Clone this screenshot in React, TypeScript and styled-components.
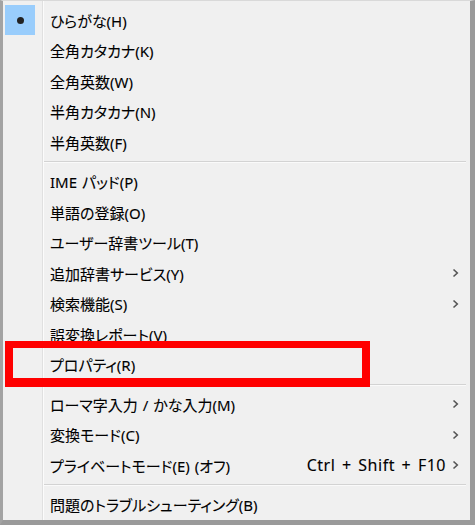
import styled, { createGlobalStyle } from 'styled-components';

const GlobalStyle = createGlobalStyle`
  html, body {
    margin: 0;
    padding: 0;
    background: #f0f0f0;
  }
  body {
    font-family: 'Noto Sans', 'Noto Sans CJK JP', sans-serif;
  }
`;

const Menu = styled.div`
  position: relative;
  box-sizing: border-box;
  width: 475px;
  height: 525px;
  padding-top: 4px;
  border-top: 1px solid #d9d9d9;
  border-left: 3px solid #a3a3a3;
  border-right: 5px solid #9a9a9a;
  border-bottom: 5px solid #9a9a9a;
  background:
    linear-gradient(
      to right,
      transparent 39px,
      #e0e0e0 39px,
      #e0e0e0 40px,
      #fbfbfb 40px,
      #fbfbfb 41px,
      transparent 41px
    ),
    #f0f0f0;
  color: #000;
  font-size: 15px;
  font-feature-settings: 'palt';
`;

const Row = styled.div`
  display: grid;
  grid-template-columns: 41px 6px 1fr auto 22px;
  align-items: center;
  height: 30.5px;
`;

const Gutter = styled.div<{ checked?: boolean }>`
  display: flex;
  align-items: center;
  justify-content: center;
  width: 30px;
  height: 30px;
  margin-left: 2px;
  background: ${(p) => (p.checked ? '#99cdfc' : 'transparent')};
`;

const Bullet = styled.span`
  width: 7px;
  height: 7px;
  border-radius: 50%;
  background: #222;
`;

const Label = styled.span`
  grid-column: 3;
  white-space: nowrap;
  word-spacing: 1px;
  -webkit-text-stroke: 0.1px #000;
`;

const Shortcut = styled.span`
  grid-column: 4;
  white-space: nowrap;
  padding-right: 2px;
  font-size: 16px;
  letter-spacing: 0.5px;
  word-spacing: 2px;
  -webkit-text-stroke: 0.1px #000;
`;

const Arrow = styled.svg`
  grid-column: 5;
  justify-self: start;
  margin-left: 4px;
`;

const Separator = styled.div`
  height: 9px;
  display: flex;
  align-items: center;
  margin-left: 41px;
  margin-right: 4px;
  &::after {
    content: '';
    flex: 1;
    height: 1px;
    background: #d3d3d3;
    border-bottom: 1px solid #fafafa;
  }
`;

const Highlight = styled.div`
  position: absolute;
  left: 2px;
  top: 340px;
  width: 365px;
  height: 46px;
  box-sizing: border-box;
  border: 8px solid #ff0000;
  border-top-width: 7px;
  border-bottom-width: 9px;
  pointer-events: none;
`;

interface Item {
  label: string;
  checked?: boolean;
  sub?: boolean;
  shortcut?: string;
}

const groups: Item[][] = [
  [
    { label: 'ひらがな(H)', checked: true },
    { label: '全角カタカナ(K)' },
    { label: '全角英数(W)' },
    { label: '半角カタカナ(N)' },
    { label: '半角英数(F)' },
  ],
  [
    { label: 'IME パッド(P)' },
    { label: '単語の登録(O)' },
    { label: 'ユーザー辞書ツール(T)' },
    { label: '追加辞書サービス(Y)', sub: true },
    { label: '検索機能(S)', sub: true },
    { label: '誤変換レポート(V)' },
    { label: 'プロパティ(R)' },
  ],
  [
    { label: 'ローマ字入力 / かな入力(M)', sub: true },
    { label: '変換モード(C)', sub: true },
    { label: 'プライベートモード(E) (オフ)', shortcut: 'Ctrl + Shift + F10', sub: true },
  ],
  [{ label: '問題のトラブルシューティング(B)' }],
];

function Chevron() {
  return (
    <Arrow width="7" height="10" viewBox="0 0 7 10">
      <path d="M1.5 1.5 L5.3 5 L1.5 8.5" fill="none" stroke="#555" strokeWidth="1.6" />
    </Arrow>
  );
}

export default function App() {
  return (
    <>
      <GlobalStyle />
      <Menu>
        {groups.map((group, gi) => (
          <div key={gi}>
            {gi > 0 && <Separator />}
            {group.map((item) => (
              <Row key={item.label}>
                <Gutter checked={item.checked}>{item.checked && <Bullet />}</Gutter>
                <Label>{item.label}</Label>
                {item.shortcut && <Shortcut>{item.shortcut}</Shortcut>}
                {item.sub && <Chevron />}
              </Row>
            ))}
          </div>
        ))}
        <Highlight />
      </Menu>
    </>
  );
}
